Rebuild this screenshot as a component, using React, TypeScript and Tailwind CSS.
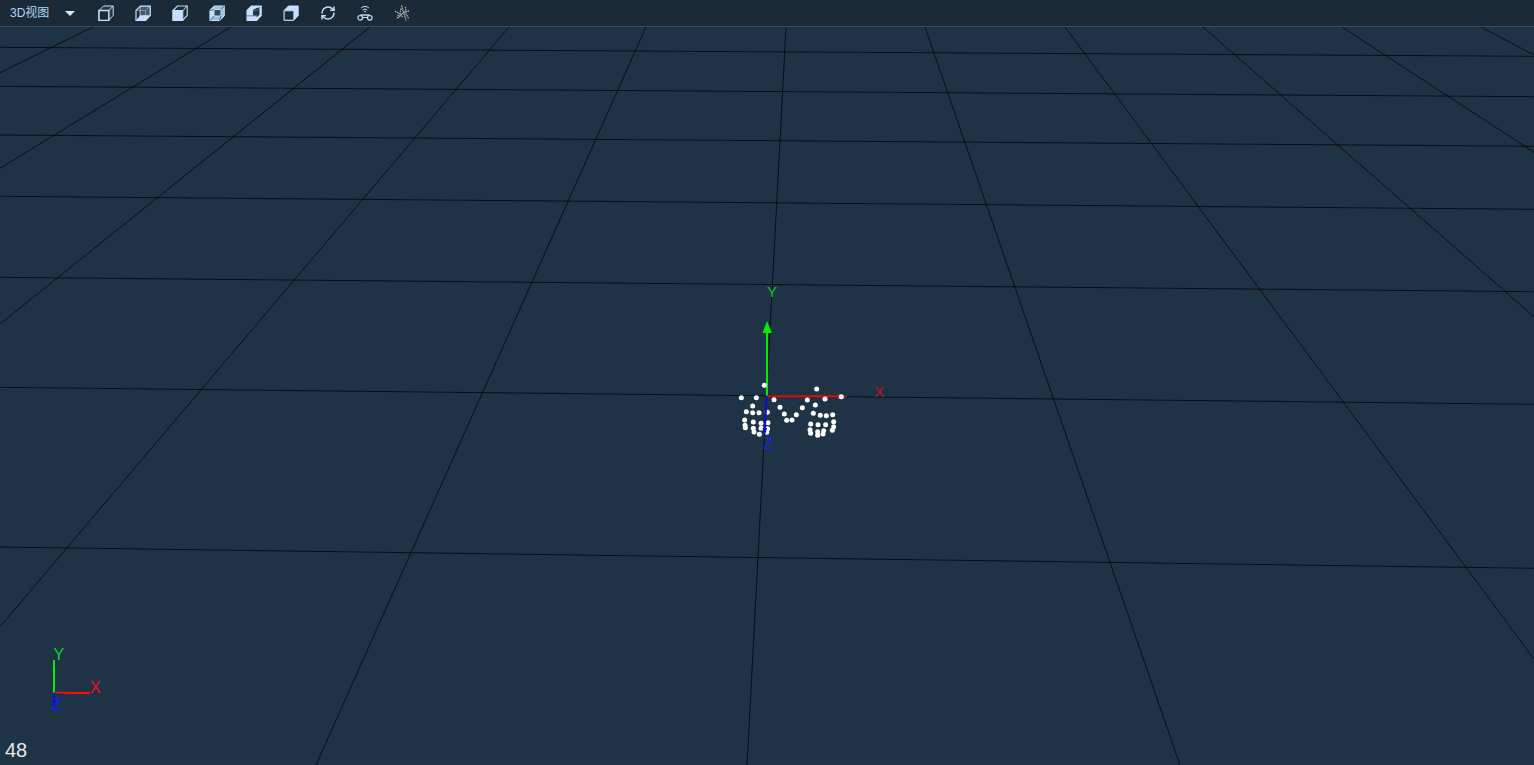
import React from "react";

const LINES: [number, number, number, number][] = [
  [0, 47.3, 1534, 56.3],
  [0, 86.3, 1534, 96.7],
  [0, 135, 1534, 146.3],
  [0, 196.3, 1534, 209.3],
  [0, 277.3, 1534, 291.7],
  [0, 387.3, 1534, 404.3],
  [0, 547, 1534, 568.3],
  [93, 27, 0, 72.7],
  [231, 27, 0, 168.3],
  [370, 27, 0, 324],
  [509, 27, 0, 626.7],
  [646, 27, 316, 765],
  [786, 27, 747, 765],
  [925, 27, 1180, 765],
  [1065, 27, 1534, 659],
  [1203, 27, 1534, 316.7],
  [1342, 27, 1534, 152.3],
  [1481, 27, 1534, 55],
];

const POINTS: [number, number][] = [
  [118, 316], [49, 353], [94, 353], [147, 359], [83, 378], [64, 395], [83, 398], [102, 398], [127, 397],
  [59, 420], [60, 436], [61, 443], [85, 426], [85, 445], [108, 430], [129, 428], [108, 445], [128, 446],
  [87, 456], [103, 463], [125, 457], [165, 382], [178, 402], [185, 421], [201, 420], [214, 404], [232, 383],
  [247, 360], [275, 327], [300, 357], [349, 350], [271, 375], [265, 400], [286, 406], [304, 407], [323, 404],
  [257, 432], [279, 434], [302, 434], [326, 425], [326, 440], [322, 451], [255, 449], [257, 460], [278, 455],
  [278, 466], [296, 452], [294, 462],
];

const C = "#c4e0fa";

function Shell({ children }: { children?: React.ReactNode }) {
  return (
    <svg width="16" height="16" viewBox="0 0 16 16" fill="none" stroke={C} strokeWidth="1" className="shrink-0">
      {children}
    </svg>
  );
}

const OUTER = "M1 5.5 L5.5 1 H15.2 V10.5 L10.5 15.5 H1 Z";

function CubeFront() {
  return (
    <Shell>
      <path d={OUTER} fill="#26394b" strokeWidth="1" />
      <rect x="1" y="5.5" width="9.8" height="10" fill="#1b2a38" strokeWidth="1.5" />
      <path d="M11 5.5 L15 1" />
    </Shell>
  );
}
function CubeBack() {
  return (
    <Shell>
      <path d={OUTER} fill="#1c2b39" strokeWidth="1.2" />
      <path d="M1 15.5 L5 10.5 H15 L10.5 15.5 Z" fill={C} stroke="none" />
      <rect x="5" y="1.5" width="10" height="9" fill="#46596c" strokeWidth="0.8" />
      <path d="M1 5.5 H10.5 V15 M10.5 5.5 L15 1" strokeWidth="0.7" opacity="0.6" />
    </Shell>
  );
}
function CubeFilledFront() {
  return (
    <Shell>
      <path d={OUTER} fill="#1c2b39" strokeWidth="1.1" />
      <rect x="1" y="5.5" width="9.8" height="10" fill={C} stroke={C} />
      <path d="M11 5.5 L15 1" />
    </Shell>
  );
}
function CubeInner() {
  return (
    <Shell>
      <path d={OUTER} fill="#9dbdd8" strokeWidth="1.2" />
      <path d="M1 5.5 L5 1 V11 L1 15.5 Z" fill={C} stroke="none" />
      <rect x="5" y="4.5" width="7" height="6.5" fill="#33495d" strokeWidth="1" />
      <path d="M1 15.5 L5 11 M12 4.5 L15 1 M1 5.5 L5 4.5 M12 11 L10.5 15.5" stroke="#33495d" strokeWidth="0.8" />
    </Shell>
  );
}
function CubeLeft() {
  return (
    <Shell>
      <path d={OUTER} fill={C} strokeWidth="1.1" />
      <path d="M7 5 L11 2.8 H13.5 V9.5 L10.8 12.5 V10.8 H7 Z" fill="#22364a" stroke="none" />
      <path d="M1 10.8 H11 M7 5.5 H11 L14 2" stroke="#5f7589" strokeWidth="0.8" />
    </Shell>
  );
}
function CubeRight() {
  return (
    <Shell>
      <path d={OUTER} fill={C} strokeWidth="1" />
      <rect x="1.5" y="6" width="9" height="9" fill="#1b2a38" stroke="#8fadc7" strokeWidth="0.8" />
    </Shell>
  );
}
function Refresh() {
  return (
    <svg width="16" height="16" viewBox="0 0 24 24" fill="none" stroke={C} strokeWidth="2.2" strokeLinecap="round" strokeLinejoin="round" className="shrink-0">
      <path d="M3 12a9 9 0 0 1 9-9 9.75 9.75 0 0 1 6.74 2.74L21 8" />
      <path d="M21 3v5h-5" />
      <path d="M21 12a9 9 0 0 1-9 9 9.75 9.75 0 0 1-6.74-2.74L3 16" />
      <path d="M8 16H3v5" />
    </svg>
  );
}
function Signal() {
  return (
    <svg width="16" height="16" viewBox="0 0 16 16" fill="none" stroke={C} strokeWidth="1" className="shrink-0">
      <path d="M4 3 Q8 -0.2 12 3" />
      <path d="M5.7 5 Q8 3.2 10.3 5" />
      <circle cx="8" cy="6.6" r="0.8" fill={C} stroke="none" />
      <path d="M3.5 10 H12.5" strokeWidth="1.4" />
      <circle cx="3.2" cy="12.8" r="2.3" strokeWidth="1.2" />
      <circle cx="12.8" cy="12.8" r="2.3" strokeWidth="1.2" />
      <path d="M5.5 12.5 H10.5" strokeWidth="1" />
    </svg>
  );
}
function Scatter() {
  return (
    <svg width="16" height="16" viewBox="0 0 16 16" fill="none" stroke="#b3b8b8" strokeWidth="1.3" strokeDasharray="1.4 0.7" className="shrink-0">
      <path d="M7.5 0.5 L12 15.5" />
      <path d="M1 6 L5 8.5 L3 14" />
      <path d="M15 6 L10 7 L4 13" />
      <path d="M7 3.5 L6 9 L8.5 12" />
      <path d="M11.5 2 L12 9 L15 14" />
    </svg>
  );
}

export default function App() {
  return (
    <div className="flex h-screen w-full flex-col overflow-hidden bg-[#1f3346] font-['Liberation_Sans','Noto_Sans_CJK_SC',sans-serif]">
      <div className="flex h-[27px] shrink-0 items-center border-b border-[#3a4e61] bg-[#1a2a38] pl-[10px]">
        <span className="text-xs leading-none text-[#b3d3f0]">3D视图</span>
        <span className="ml-[16px] h-0 w-0 border-x-[5px] border-t-[5px] border-x-transparent border-t-[#dce9f6]" />
        <div className="ml-[23px] flex items-center gap-[21px]">
          <CubeFront />
          <CubeBack />
          <CubeFilledFront />
          <CubeInner />
          <CubeLeft />
          <CubeRight />
          <Refresh />
          <Signal />
          <Scatter />
        </div>
      </div>
      <div className="relative flex-1">
        <svg className="absolute left-0 top-[-27px]" width="1534" height="765" viewBox="0 0 1534 765">
          {LINES.map(([a, b, c, d], i) => (
            <line key={i} x1={a} y1={b} x2={c} y2={d} stroke="#000" strokeOpacity="0.85" strokeWidth="0.85" />
          ))}
          <line x1="767" y1="396" x2="767" y2="331" stroke="#00f000" strokeWidth="2" />
          <polygon points="767,321 771.8,333 762.5,333" fill="#00f000" />
          <line x1="767" y1="396.3" x2="840" y2="396.3" stroke="#e00b0b" strokeWidth="2" />
          <polygon points="848,396.5 838,394 838,399" fill="#e00b0b" />
          {POINTS.map(([x, y], i) => (
            <circle key={i} cx={725 + x / 3} cy={280 + y / 3} r="2.5" fill="#fff" />
          ))}
          <line x1="766.8" y1="396" x2="764.8" y2="432" stroke="#0b0be8" strokeWidth="1.8" />
          <polygon points="762.5,428 767,428 764.5,437" fill="#0b0be8" />
          <text x="767" y="297" fontSize="15" fill="#0fc42e" fontFamily="Liberation Sans">Y</text>
          <text x="874.5" y="397" fontSize="14" fill="#d01024" fontFamily="Liberation Sans">X</text>
          <text x="763.5" y="449" fontSize="16" fill="#1226e6" fontFamily="Liberation Sans">Z</text>

          <line x1="54" y1="660" x2="54" y2="693" stroke="#00f000" strokeWidth="2" />
          <line x1="54" y1="692.5" x2="65" y2="692.5" stroke="#f01010" strokeWidth="1.6" />
          <line x1="65" y1="693" x2="90" y2="693" stroke="#f01010" strokeWidth="2.2" />
          <line x1="54" y1="693" x2="54" y2="709.5" stroke="#0808f0" strokeWidth="2" />
          <text x="53.5" y="660" fontSize="16" fill="#10d030" fontFamily="Liberation Sans">Y</text>
          <text x="90" y="693" fontSize="16" fill="#f0101f" fontFamily="Liberation Sans">X</text>
          <text x="51.5" y="709.5" fontSize="16" fill="#1020f0" fontFamily="Liberation Sans">Z</text>
        </svg>
        <div className="absolute bottom-[3px] left-[5px] text-[20px] leading-[23px] text-[#e4e8ec]">48</div>
      </div>
    </div>
  );
}
